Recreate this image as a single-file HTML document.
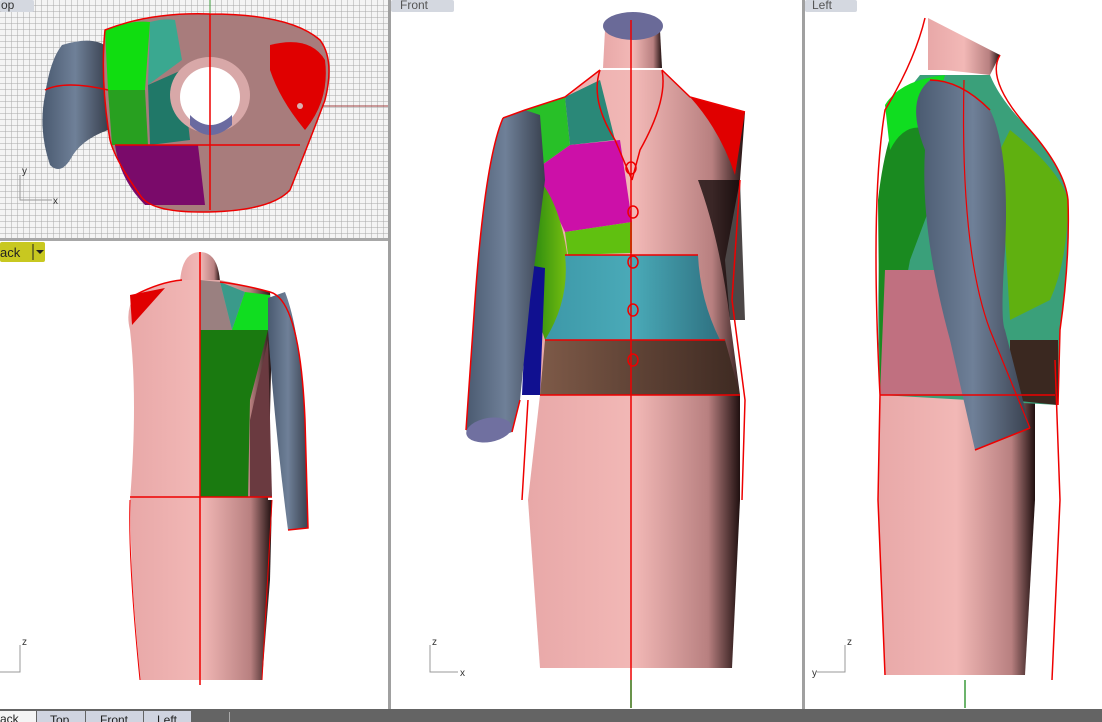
<!DOCTYPE html>
<html><head><meta charset="utf-8"><style>
html,body{margin:0;padding:0;width:1102px;height:722px;overflow:hidden;background:#fff;font-family:"Liberation Sans",sans-serif}
svg{display:block}
</style></head><body>
<svg width="1102" height="722" viewBox="0 0 1102 722" xmlns="http://www.w3.org/2000/svg">
<defs>
<pattern id="grid" width="6" height="6" patternUnits="userSpaceOnUse">
<rect width="6" height="6" fill="#f4f4f4"/><path d="M6 0V6H0" fill="none" stroke="#a8a8a8" stroke-width="1"/>
</pattern>
<linearGradient id="pink" x1="0" x2="1"><stop offset="0" stop-color="#e8a8a8"/><stop offset="0.5" stop-color="#f2b8b6"/><stop offset="0.85" stop-color="#b88080"/><stop offset="1" stop-color="#201010"/></linearGradient>
<linearGradient id="sleeve" x1="0" x2="1"><stop offset="0" stop-color="#4a5a70"/><stop offset="0.5" stop-color="#6f8098"/><stop offset="1" stop-color="#38404e"/></linearGradient>
<linearGradient id="brown" x1="0" x2="1"><stop offset="0" stop-color="#7e5a48"/><stop offset="1" stop-color="#3e2a22"/></linearGradient>
<linearGradient id="teal" x1="0" x2="1"><stop offset="0" stop-color="#3d98a8"/><stop offset="0.5" stop-color="#4aaab8"/><stop offset="1" stop-color="#2e7080"/></linearGradient>
<linearGradient id="green" x1="0" x2="1"><stop offset="0" stop-color="#2a8a10"/><stop offset="1" stop-color="#78c010"/></linearGradient>
</defs>

<!-- TOP viewport -->
<rect x="0" y="0" width="388" height="238" fill="url(#grid)"/>
<line x1="210" y1="0" x2="210" y2="106" stroke="#3a9a3a"/>
<line x1="210" y1="106" x2="388" y2="106" stroke="#a04040"/>
<path d="M62 45 Q95 35 108 48 L108 130 Q80 140 70 160 Q60 175 50 165 Q38 130 45 95 Q50 60 62 45Z" fill="url(#sleeve)"/>
<path d="M105 30 Q150 12 210 14 Q290 14 320 40 Q335 60 325 100 Q310 140 290 190 Q270 212 200 212 Q150 212 140 195 Q115 160 110 140 Q100 80 105 30Z" fill="#a87c7c"/>
<path d="M105 30 Q130 20 150 22 L145 90 L108 90Z" fill="#10dd10"/>
<path d="M108 90 L145 90 L148 145 L112 145Z" fill="#28a020"/>
<path d="M150 22 Q165 18 175 20 L182 60 L148 85Z" fill="#3aa890"/>
<path d="M148 85 L182 70 L190 140 L150 145Z" fill="#207868"/>
<path d="M115 145 L198 145 L205 205 L145 205 Q120 180 115 145Z" fill="#7a0a6a"/>
<path d="M270 45 Q310 35 325 60 Q330 100 305 130 Q280 100 270 70Z" fill="#e00000"/>
<circle cx="300" cy="106" r="3" fill="#d8b0b0"/>
<ellipse cx="210" cy="95" rx="40" ry="38" fill="#d8a8a8"/>
<ellipse cx="210" cy="97" rx="30" ry="30" fill="#fff"/>
<path d="M190 115 Q210 135 232 115 L232 125 Q210 145 190 125Z" fill="#6a6aa0"/>
<path d="M105 30 Q150 12 210 14 Q290 14 320 40 Q335 60 325 100 Q310 140 290 190 Q270 212 200 212 Q150 212 140 195 Q115 160 110 140 Q100 80 105 30Z M45 90 Q65 80 108 90 M210 14 V210 M115 145 L300 145" fill="none" stroke="#e00" stroke-width="1.5"/>
<path d="M20 175 V200 H52" fill="none" stroke="#999"/>
<text x="22" y="174" font-size="10" fill="#333">y</text><text x="53" y="204" font-size="10" fill="#333">x</text>
<rect x="0" y="0" width="34" height="12" fill="#d4d8e0" rx="2"/><text x="1" y="9" font-size="12" fill="#333">op</text>

<!-- separators -->
<rect x="388" y="0" width="3" height="710" fill="#a0a0a0"/>
<rect x="0" y="238" width="388" height="3" fill="#a8a8a8"/>
<rect x="802" y="0" width="3" height="710" fill="#a0a0a0"/>

<!-- BACK viewport -->
<rect x="0" y="242" width="45" height="20" fill="#c8c820" rx="2"/><text x="0" y="257" font-size="13" fill="#222">ack</text>
<path d="M33 244 V260" stroke="#222"/><path d="M36 250 l4 4 4-4z" fill="#222"/>
<path d="M130 500 L272 500 L270 580 L262 680 L140 680 L132 580Z" fill="url(#pink)"/>
<path d="M180 282 Q182 252 200 252 Q218 252 220 282Z" fill="url(#pink)"/>
<path d="M135 295 Q160 282 182 280 L220 280 Q245 285 270 292 L272 330 L268 500 L130 500 Q138 400 130 330 Q125 310 135 295Z" fill="url(#pink)"/>
<path d="M130 295 L165 288 L132 325Z" fill="#e00000"/>
<path d="M200 280 L220 282 L232 330 L200 330Z" fill="#9a8080"/>
<path d="M220 282 L245 292 L232 330Z" fill="#3a9a8a"/>
<path d="M245 292 L270 295 L270 330 L232 330Z" fill="#10dd20"/>
<path d="M200 330 L268 330 L250 400 L248 497 L200 497Z" fill="#1a7a10"/>
<path d="M250 420 L268 340 L272 497 L250 497Z" fill="#6a3a40"/>
<path d="M268 298 L285 292 Q300 330 305 420 L308 528 L288 530 Q275 430 268 330Z" fill="url(#sleeve)"/>
<path d="M200 252 V685 M130 497 H272 M135 295 Q160 282 182 280 M220 282 Q245 285 270 292 Q300 300 305 420 L308 528 L288 530" fill="none" stroke="#e00" stroke-width="1.5"/>
<path d="M130 500 Q128 560 140 680 M272 500 L262 680" fill="none" stroke="#e00" stroke-width="1"/>
<path d="M20 645 V672 H0" fill="none" stroke="#999"/><text x="22" y="645" font-size="10" fill="#333">z</text>

<!-- FRONT viewport -->
<rect x="391" y="0" width="63" height="12" fill="#d4d8e0" rx="2"/><text x="400" y="9" font-size="12" fill="#555">Front</text>
<path d="M540 395 L740 395 L740 500 L732 668 L540 668 L528 500Z" fill="url(#pink)"/>
<path d="M603 68 L605 30 L660 30 L662 68Z" fill="url(#pink)"/>
<ellipse cx="633" cy="26" rx="30" ry="14" fill="#6a6a98"/>
<path d="M525 110 L565 97 L600 70 L662 70 L690 97 L745 112 L740 180 L725 260 L730 320 L740 395 L540 395 L530 300 L535 200Z" fill="url(#pink)"/>
<path d="M525 110 L565 97 L570 145 L535 170Z" fill="#28c028"/>
<path d="M565 97 L600 80 L615 140 L570 145Z" fill="#2a8878"/>
<path d="M535 170 L570 145 L620 140 L632 222 L565 232Z" fill="#cc10a8"/>
<path d="M565 232 L632 222 L632 253 L568 255Z" fill="#60c010"/>
<path d="M535 175 Q560 200 568 260 Q570 320 545 340 L532 300Z" fill="url(#green)"/>
<path d="M528 265 L545 268 L540 395 L522 395Z" fill="#101090"/>
<path d="M565 255 L698 255 Q700 300 720 340 L545 340 Q570 300 565 255Z" fill="url(#teal)"/>
<path d="M545 340 L725 340 L740 395 L540 395Z" fill="url(#brown)"/>
<path d="M690 97 L745 112 L735 175 Q720 130 690 97Z" fill="#e00000"/>
<path d="M698 180 Q720 240 730 320 L745 320 L740 180Z" fill="#100808" opacity="0.75"/>
<path d="M525 110 L503 118 Q485 160 475 300 L466 430 Q480 445 512 432 L520 400 L530 300 L545 180 L540 115Z" fill="url(#sleeve)"/>
<ellipse cx="489" cy="430" rx="23" ry="12" fill="#7070a0" transform="rotate(-10 489 430)"/>
<path d="M631 20 V708" stroke="#e00" stroke-width="1.5"/>
<path d="M631 680 V708" stroke="#3a9a3a" stroke-width="1.5"/>
<path d="M503 118 L525 110 L565 97 L600 70 M662 70 L690 97 L745 112 M503 118 Q485 160 475 300 L466 430 M512 432 L520 400 M540 395 H740 M545 340 H725 M565 255 H698 M600 70 Q590 100 615 140 L632 180 M662 70 Q668 100 640 150 L632 180 M740 180 L732 300 L745 400 L742 500 M528 400 L522 500" fill="none" stroke="#e00" stroke-width="1.5"/>
<g fill="none" stroke="#e00" stroke-width="1.5"><ellipse cx="631" cy="168" rx="5" ry="6"/><ellipse cx="633" cy="212" rx="5" ry="6"/><ellipse cx="633" cy="262" rx="5" ry="6"/><ellipse cx="633" cy="310" rx="5" ry="6"/><ellipse cx="633" cy="360" rx="5" ry="6"/></g>
<path d="M430 645 V672 H458" fill="none" stroke="#999"/><text x="432" y="645" font-size="10" fill="#333">z</text><text x="460" y="676" font-size="10" fill="#333">x</text>

<!-- LEFT viewport -->
<rect x="805" y="0" width="52" height="12" fill="#d4d8e0" rx="2"/><text x="812" y="9" font-size="12" fill="#555">Left</text>
<path d="M880 395 L1035 395 L1035 500 L1025 675 L885 675 L878 500Z" fill="url(#pink)"/>
<path d="M928 18 L1000 55 L990 75 L945 70 L928 70Z" fill="url(#pink)"/>
<path d="M920 75 L990 75 Q1000 100 1030 130 Q1065 170 1068 200 Q1070 260 1060 330 L1058 405 L880 395 Q872 200 900 100Z" fill="#3aa07a"/>
<path d="M880 395 L878 200 Q890 95 930 80 L940 180 L910 260 L885 395Z" fill="#1a8a20"/>
<path d="M885 105 Q900 80 945 75 L930 130 Q905 120 890 150Z" fill="#10dd20"/>
<path d="M885 270 L1000 270 L1000 395 L880 395Z" fill="#c07080"/>
<path d="M1010 130 Q1060 170 1068 200 Q1068 260 1050 300 L1010 320 L1000 150Z" fill="#60b010"/>
<path d="M1010 340 L1058 340 L1058 405 L1010 400Z" fill="#3a2820"/>
<path d="M930 80 Q960 80 990 110 Q1010 150 1005 250 Q1000 320 1005 330 L1030 428 L975 450 L950 340 Q920 230 925 150 Q905 100 930 80Z" fill="url(#sleeve)"/>
<path d="M964 80 Q960 250 990 330 L1030 428" fill="none" stroke="#e00" stroke-width="1.2"/>
<path d="M925 18 Q915 60 885 110 Q870 200 880 395 L878 500 L885 675 M1000 55 Q985 80 1030 130 Q1065 170 1068 200 Q1070 260 1060 330 L1058 405 M1055 360 L1060 500 L1052 680 M880 395 H1055 M930 80 Q960 80 990 110 M975 450 L1030 428" fill="none" stroke="#e00" stroke-width="1.5"/>
<path d="M965 680 V708" stroke="#3a9a3a" stroke-width="1.5"/>
<path d="M845 645 V672 H817" fill="none" stroke="#999"/><text x="847" y="645" font-size="10" fill="#333">z</text><text x="812" y="676" font-size="10" fill="#333">y</text>

<!-- bottom bar -->
<rect x="0" y="709" width="1102" height="13" fill="#646464"/>
<rect x="0" y="711" width="36" height="11" fill="#f4f4f4"/><text x="0" y="723" font-size="12" fill="#222">ack</text>
<rect x="37" y="711" width="48" height="11" fill="#d0d4e0"/><text x="50" y="724" font-size="12" fill="#222">Top</text>
<rect x="86" y="711" width="57" height="11" fill="#d0d4e0"/><text x="100" y="724" font-size="12" fill="#222">Front</text>
<rect x="144" y="711" width="47" height="11" fill="#d0d4e0"/><text x="157" y="724" font-size="12" fill="#222">Left</text>
<rect x="229" y="712" width="1" height="10" fill="#aaa"/>
</svg>
</body></html>
